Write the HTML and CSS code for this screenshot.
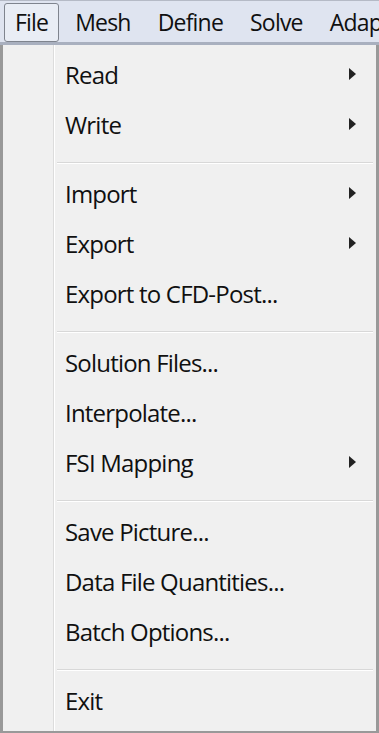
FILE: index.html
```html
<!DOCTYPE html>
<html lang="en">
  <head>
    <meta charset="UTF-8" />
    <meta name="viewport" content="width=device-width, initial-scale=1.0" />
    <title>File menu</title>
    <link rel="stylesheet" href="styles.css">
  </head>
  <body>
    <header class="menubar">
      <span class="top valgt">File</span>
      <span class="top">Mesh</span>
      <span class="top">Define</span>
      <span class="top">Solve</span>
      <span class="top">Adapt</span>
    </header>
    <section class="menu">
      <div class="gutter"></div>
      <ul class="items">
        <li class="item"><span>Read</span><i class="pil"></i></li>
        <li class="item"><span>Write</span><i class="pil"></i></li>
        <li class="sep"></li>
        <li class="item"><span>Import</span><i class="pil"></i></li>
        <li class="item"><span>Export</span><i class="pil"></i></li>
        <li class="item"><span>Export to CFD-Post...</span></li>
        <li class="sep"></li>
        <li class="item"><span>Solution Files...</span></li>
        <li class="item"><span>Interpolate...</span></li>
        <li class="item"><span>FSI Mapping</span><i class="pil"></i></li>
        <li class="sep"></li>
        <li class="item"><span>Save Picture...</span></li>
        <li class="item"><span>Data File Quantities...</span></li>
        <li class="item"><span>Batch Options...</span></li>
        <li class="sep"></li>
        <li class="item"><span>Exit</span></li>
      </ul>
    </section>
  </body>
</html>
```

FILE: styles.css
```css
      body {
        margin: 0;
        background-color: #f0f0f0;
        font-family: "Open Sans", "Noto Sans", sans-serif;
        letter-spacing: -0.8px;
        color: #101010;
        overflow: hidden;
      }

      .menubar {
        display: flex;
        gap: 5px;
        height: 39px;
        padding: 2px 0 0 4px;
        border-top: 1px solid #b5bac6;
        border-bottom: 3px solid #a9b0bf;
        background-color: #dfe4f0;
        white-space: nowrap;
        overflow: hidden;
      }

      .top {
        font-size: 23px;
        line-height: 36px;
        padding: 0 10px;
        border: 1px solid transparent;
      }

      .valgt {
        border-color: #7f848e;
        border-radius: 3px;
        background-color: #e9edf5;
      }

      .menu {
        display: flex;
        height: 686px;
        border: 3px solid #999;
        border-top: 0;
        background-color: #f0f0f0;
      }

      .gutter {
        width: 50px;
        border-right: 1px solid #dcdcdc;
        box-shadow: 1px 0 0 #fff;
      }

      .items {
        flex: 1;
        list-style: none;
        margin: 0;
        padding: 4px 0 0 3px;
      }

      .item {
        display: flex;
        align-items: center;
        justify-content: space-between;
        height: 50px;
        padding: 0 20px 0 8px;
        font-size: 24px;
      }

      .pil {
        width: 0;
        height: 0;
        border-top: 6px solid transparent;
        border-bottom: 6px solid transparent;
        border-left: 7px solid #222;
      }

      .sep {
        box-sizing: border-box;
        height: 19px;
        padding-top: 13px;
        display: flex;
        align-items: flex-start;
      }

      .sep::after {
        content: "";
        flex: 1;
        margin-right: 3px;
        border-top: 1px solid #d8d8d8;
        border-bottom: 1px solid #fff;
      }
```
